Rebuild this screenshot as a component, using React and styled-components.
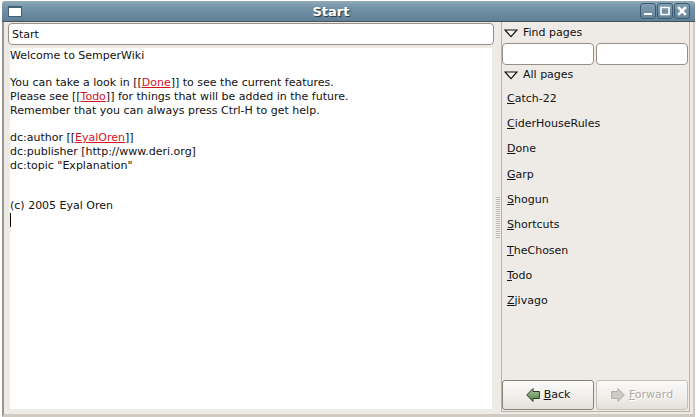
import React from 'react'
import styled, { createGlobalStyle } from 'styled-components'

const pages = [
  'Catch-22',
  'CiderHouseRules',
  'Done',
  'Garp',
  'Shogun',
  'Shortcuts',
  'TheChosen',
  'Todo',
  'Zjivago',
]

// The first letter is the keyboard mnemonic

const Mnemonic = ({ children }) => (
  <span>
    <u>{children[0]}</u>
    {children.slice(1)}
  </span>
)

const Triangle = () => (
  <svg width="14" height="9" viewBox="0 0 14 9" aria-hidden="true">
    <path d="M1 1H13L7 7.6Z" fill="#f8f6f3" stroke="#111" strokeWidth="1.2" />
  </svg>
)

const Arrow = ({ forward }) => (
  <svg width="14" height="14" viewBox="0 0 14 14" aria-hidden="true">
    <defs>
      <linearGradient id="leaf" x1="0" y1="0" x2="0" y2="1">
        <stop offset="0" stopColor="#a9c8a0" />
        <stop offset="1" stopColor="#4e8046" />
      </linearGradient>
    </defs>
    <path
      d="M.7 7L7 .6V3.5H13.4V10.5H7V13.4Z"
      transform={forward ? 'translate(14 0) scale(-1 1)' : undefined}
      fill={forward ? '#cdc9c4' : 'url(#leaf)'}
      stroke={forward ? '#b3afa9' : '#2c3a2a'}
      strokeLinejoin="round"
    />
  </svg>
)

const WindowIcon = ({ d, width }) => (
  <svg width="14" height="14" viewBox="0 0 14 14" aria-hidden="true">
    <path d={d} fill="none" stroke="#fff" strokeWidth={width} />
  </svg>
)

const App = () => {
  return (
    <>
      <GlobalStyle />
      <Window>
        <TitleBar>
          <AppIcon />
          <Title>Start</Title>
          <WindowButtons>
            <WindowButton type="button" aria-label="Minimize">
              <WindowIcon d="M3 10H11" width={2} />
            </WindowButton>
            <WindowButton type="button" aria-label="Maximize">
              <WindowIcon d="M3 3V11M11 3V11M2.5 3.5H11.5M2.5 10.5H11.5" width={1.6} />
            </WindowButton>
            <WindowButton type="button" aria-label="Close">
              <WindowIcon d="M3.2 3.2L10.8 10.8M10.8 3.2L3.2 10.8" width={2.6} />
            </WindowButton>
          </WindowButtons>
        </TitleBar>
        <Body>
          <Main>
            <Entry aria-label="Page name" defaultValue="Start" />
            <Editor aria-label="Page text" role="textbox" aria-multiline="true" tabIndex={0}>
              <Paragraph>Welcome to SemperWiki</Paragraph>
              <Paragraph>
                You can take a look in [[<WikiLink href="#Done">Done</WikiLink>]] to see the
                current features.
                <br />
                Please see [[<WikiLink href="#Todo">Todo</WikiLink>]] for things that will be
                added in the future.
                <br />
                Remember that you can always press Ctrl-H to get help.
              </Paragraph>
              <Paragraph $last>
                dc:author [[<WikiLink href="#EyalOren">EyalOren</WikiLink>]]
                <br />
                dc:publisher [http://www.deri.org]
                <br />
                dc:topic "Explanation"
              </Paragraph>
              <Paragraph>
                (c) 2005 Eyal Oren
                <br />
                <Caret />
              </Paragraph>
            </Editor>
          </Main>
          <Handle />
          <Sidebar>
            <Expander type="button" aria-expanded="true">
              <Triangle />
              Find pages
            </Expander>
            <Pair>
              <Entry aria-label="Find by property" />
              <Entry aria-label="Find by value" />
            </Pair>
            <Expander type="button" aria-expanded="true">
              <Triangle />
              All pages
            </Expander>
            <PageList>
              {pages.map((page) => (
                <li key={page}>
                  <PageButton type="button">
                    <Mnemonic>{page}</Mnemonic>
                  </PageButton>
                </li>
              ))}
            </PageList>
            <Pair>
              <NavButton type="button">
                <Arrow />
                <Mnemonic>Back</Mnemonic>
              </NavButton>
              <NavButton type="button" disabled>
                <Arrow forward />
                <Mnemonic>Forward</Mnemonic>
              </NavButton>
            </Pair>
          </Sidebar>
        </Body>
      </Window>
    </>
  )
}

const GlobalStyle = createGlobalStyle`
  * {
    box-sizing: border-box;
  }

  body {
    margin: 0;
    background: #fff;
    color: #111;
    font: 11px/14px 'DejaVu Sans', sans-serif;
  }

  button,
  input {
    margin: 0;
    color: inherit;
    font: inherit;
  }
`

const Window = styled.div`
  display: flex;
  flex-direction: column;
  min-height: 100vh;
  padding: 1px 1px 0 2px;
`

const TitleBar = styled.header`
  display: grid;
  grid-template-columns: 1fr auto 1fr;
  align-items: center;
  height: 21px;
  padding: 0 5px 0 6px;
  border-bottom: 1px solid #42525e;
  border-radius: 3px 3px 0 0;
  background: linear-gradient(#90aab9, #7292a6 35%, #618096);
`

const AppIcon = styled.span`
  width: 14px;
  height: 11px;
  border: 1px solid #41617a;
  border-top-width: 2px;
  background: #fff;
`

const Title = styled.h1`
  margin: 0;
  padding: 2px 36px 0 0;
  color: #fff;
  font-size: 13px;
  line-height: 18px;
  text-shadow: 1px 1px 1px #26323a;
`

const WindowButtons = styled.div`
  display: flex;
  justify-content: flex-end;
  gap: 1px;
`

const WindowButton = styled.button`
  display: flex;
  align-items: center;
  justify-content: center;
  width: 16px;
  height: 16px;
  padding: 0;
  border: 1px solid #3c5a72;
  border-radius: 3px;
  background: linear-gradient(#829eaf, #64849a);
`

const Body = styled.div`
  display: flex;
  flex: 1;
  padding: 0 3px 2px 4px;
  border: solid #d0cac3;
  border-width: 0 2px 3px;
  border-left-color: #999590;
  background: #eeebe7;
`

const Main = styled.main`
  display: flex;
  flex: 1;
  flex-direction: column;
  gap: 3px;
  min-width: 0;
  padding: 1px 0 3px;
`

const Entry = styled.input`
  width: 100%;
  min-width: 0;
  height: 22px;
  padding: 0 3px;
  border: 1px solid #989084;
  border-radius: 4px;
  background: #fff;
`

const Editor = styled.div`
  flex: 1;
  margin: 0 2px;
  padding-top: 1px;
  background: #fff;
`

const Paragraph = styled.p`
  margin: 0 0 ${({ $last }) => ($last ? '26px' : '13px')};
`

const WikiLink = styled.a`
  color: #d3131e;
`

const Caret = styled.span`
  display: inline-block;
  width: 1px;
  height: 14px;
  background: #000;
  vertical-align: top;
`

const Handle = styled.div`
  align-self: center;
  width: 4px;
  height: 41px;
  margin: 0 1px 0 2px;
  background: repeating-linear-gradient(#bcb5aa 0 1px, #f6f4f1 1px 2px);
`

const Sidebar = styled.aside`
  display: flex;
  flex-direction: column;
  width: 189px;
  padding: 1px 1px 1px 0;
  border: 1px solid #bab3a9;
  border-top: 0;
`

const Expander = styled.button`
  display: flex;
  align-items: center;
  gap: 5px;
  height: 20px;
  padding: 0 2px;
  border: 0;
  background: none;
`

const Pair = styled.div`
  display: grid;
  grid-template-columns: 1fr 1fr;
  gap: 2px;
`

const PageList = styled.ul`
  display: grid;
  flex: none;
  grid-auto-rows: 1fr;
  min-height: 228px;
  margin: 1px 0 auto;
  padding: 0;
  list-style: none;
`

const PageButton = styled.button`
  height: 100%;
  padding: 0 5px;
  border: 0;
  background: none;
`

const NavButton = styled.button`
  display: flex;
  align-items: center;
  justify-content: center;
  gap: 4px;
  height: 30px;
  padding: 0;
  border: 1px solid #8a8276;
  border-radius: 3px;
  background: linear-gradient(#fbfaf9, #f0edea 60%, #e3dfda);

  &:disabled {
    border-color: #c5beb5;
    color: #b0aba4;
    text-shadow: 1px 1px #fff;
  }
`

export default App
